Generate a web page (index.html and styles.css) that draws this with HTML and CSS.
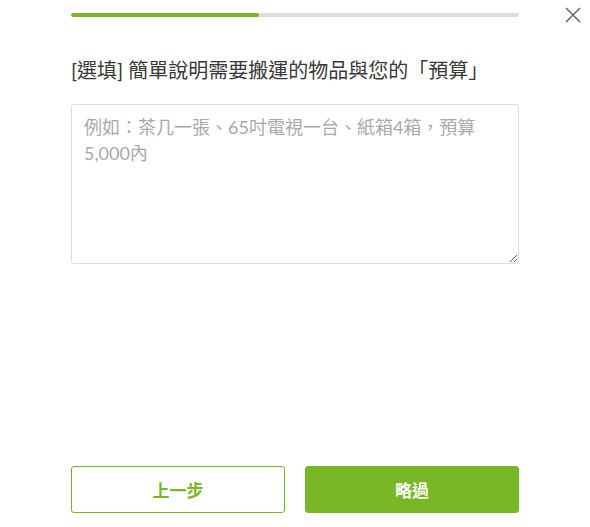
FILE: index.html
```html
<!DOCTYPE html>
<html lang="zh-Hant">
<head>
<meta charset="utf-8">
<link rel="stylesheet" href="styles.css">
</head>
<body>
<div class="modal">
  <button class="close" aria-label="close">
    <svg width="16" height="16" viewBox="0 0 16 16"><path d="M1 1L15 15M15 1L1 15" stroke="#666" stroke-width="1.5" fill="none"/></svg>
  </button>
  <div class="content">
    <div class="progress"><div class="progress-fill"></div></div>
    <h2 class="title">[選填] 簡單說明需要搬運的物品與您的「預算」</h2>
    <textarea class="field" placeholder="例如：茶几一張、65吋電視一台、紙箱4箱，預算5,000內"></textarea>
    <div class="spacer"></div>
    <div class="actions">
      <button class="btn btn-outline">上一步</button>
      <button class="btn btn-solid">略過</button>
    </div>
  </div>
</div>
</body>
</html>
```
FILE: styles.css
```css
* { box-sizing: border-box; }
html, body { margin: 0; padding: 0; background: #fff; }
body {
  font-family: Lato, "Noto Sans CJK TC", sans-serif;
  width: 590px;
  height: 527px;
  overflow: hidden;
}
.modal {
  position: relative;
  width: 590px;
  height: 527px;
}
.close {
  position: absolute;
  top: 7px;
  left: 565px;
  width: 16px;
  height: 16px;
  padding: 0;
  border: 0;
  background: none;
  display: flex;
}
.content {
  width: 448px;
  margin: 0 auto;
  padding-top: 13px;
  height: 527px;
  display: flex;
  flex-direction: column;
}
.progress {
  height: 4px;
  border-radius: 2px;
  background: #dddddd;
  overflow: hidden;
}
.progress-fill {
  width: 42%;
  height: 100%;
  background: #78b827;
  border-radius: 2px;
}
.title {
  margin: 38px 0 0;
  font-size: 20px;
  line-height: 30px;
  font-weight: 400;
  color: #383838;
  letter-spacing: 0;
}
.field {
  margin-top: 19px;
  width: 448px;
  height: 160px;
  border: 1px solid #dcdcdc;
  border-radius: 3px;
  padding: 9px 12px;
  font-family: Lato, "Noto Sans CJK TC", sans-serif;
  font-size: 18px;
  line-height: 26px;
  color: #333;
  resize: vertical;
  outline: none;
}
.field::placeholder { color: #a9a9a9; }
.spacer { flex: 1; }
.actions {
  display: flex;
  gap: 20px;
  margin-bottom: 14px;
}
.btn {
  flex: 1;
  height: 47px;
  border-radius: 3px;
  font-family: Lato, "Noto Sans CJK TC", sans-serif;
  font-size: 17px;
  font-weight: 700;
  padding: 0;
}
.btn-outline {
  background: #fff;
  border: 1px solid #78b827;
  color: #78b827;
}
.btn-solid {
  background: #78b827;
  border: 1px solid #78b827;
  color: #fff;
}
```
